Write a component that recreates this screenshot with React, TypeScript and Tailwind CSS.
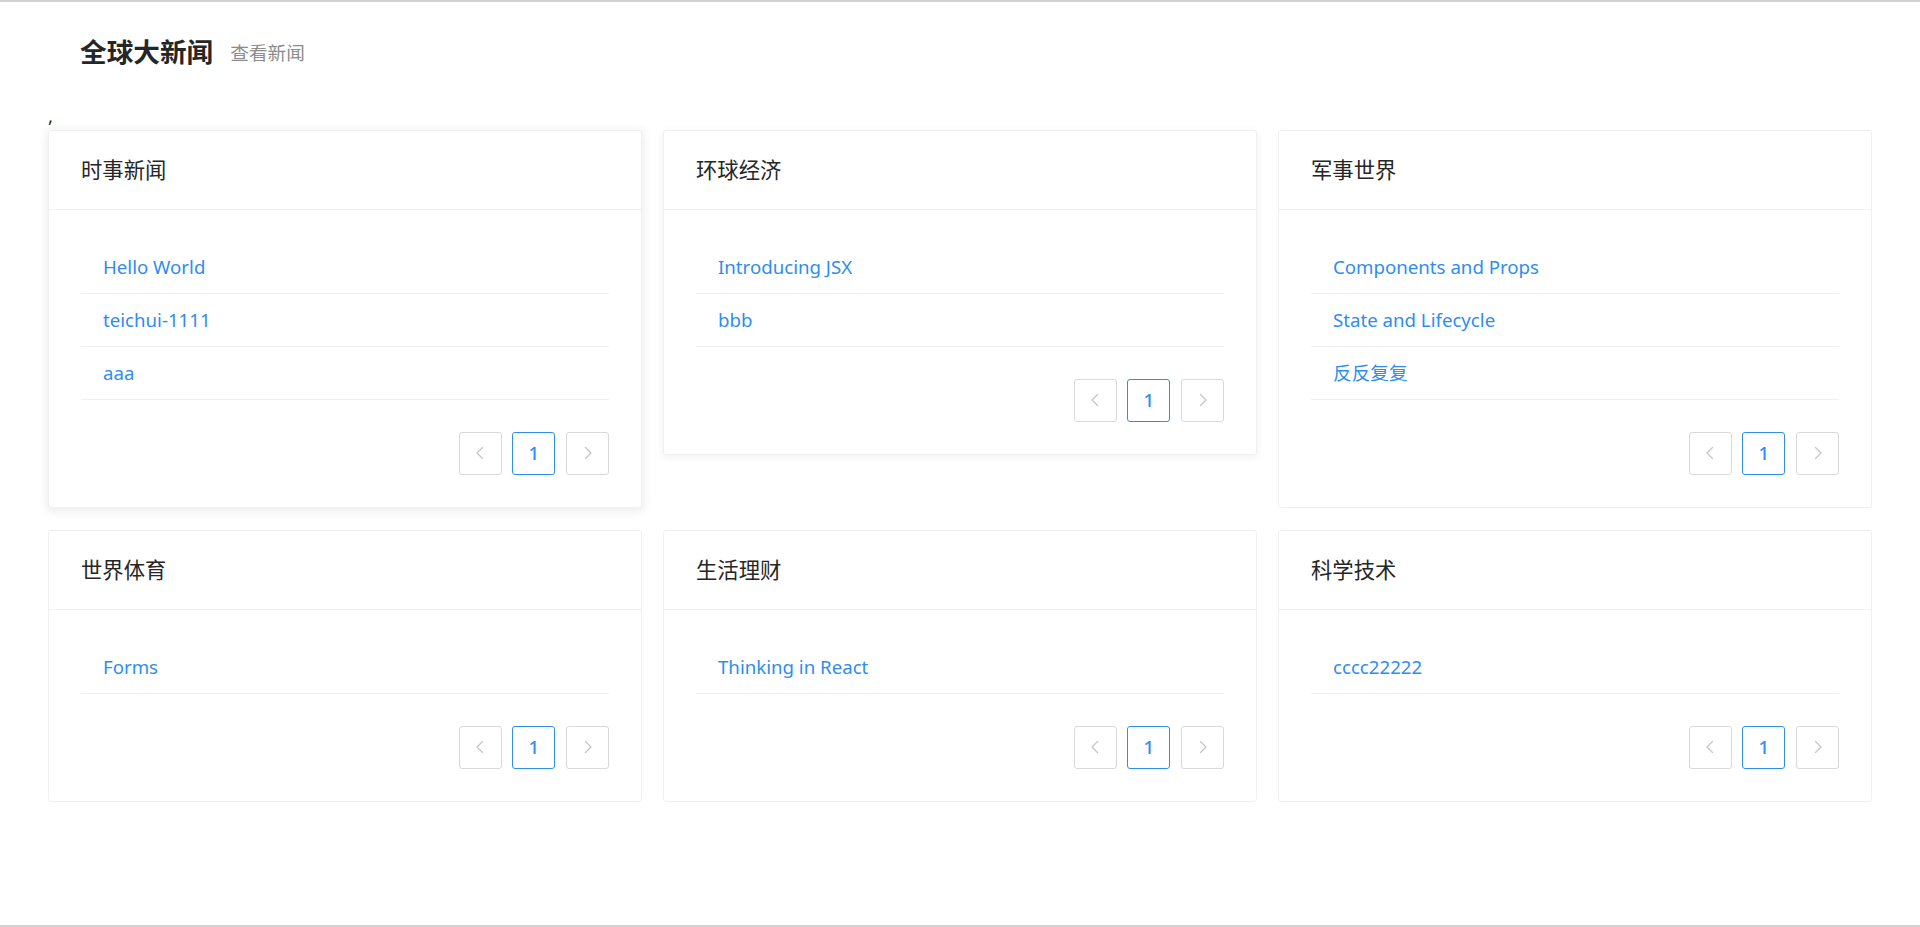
import { useState } from 'react'

const font = { fontFamily: '"Noto Sans", "Noto Sans CJK SC", sans-serif' }

type Category = {
  title: string
  items: string[]
  shadow?: 'hover' | 'fade'
}

const categories: Category[] = [
  { title: '时事新闻', items: ['Hello World', 'teichui-1111', 'aaa'], shadow: 'hover' },
  { title: '环球经济', items: ['Introducing JSX', 'bbb'], shadow: 'fade' },
  { title: '军事世界', items: ['Components and Props', 'State and Lifecycle', '反反复复'] },
  { title: '世界体育', items: ['Forms'] },
  { title: '生活理财', items: ['Thinking in React'] },
  { title: '科学技术', items: ['cccc22222'] }
]

function Arrow({ dir }: { dir: 'left' | 'right' }) {
  return (
    <svg width="16" height="16" viewBox="0 0 16 16" fill="none">
      <polyline
        points={dir === 'left' ? '10.5,2.5 5,8 10.5,13.5' : '5.5,2.5 11,8 5.5,13.5'}
        stroke="#c4c4c4"
        strokeWidth="1.2"
        strokeLinecap="round"
        strokeLinejoin="round"
      />
    </svg>
  )
}

function Pager() {
  const [page, setPage] = useState(1)
  return (
    <div className="mt-[32px] flex justify-end gap-[10.67px]">
      <button className="flex h-[43px] w-[43px] cursor-not-allowed items-center justify-center rounded-[3px] border border-[#d9d9d9] bg-white">
        <Arrow dir="left" />
      </button>
      <button
        onClick={() => setPage(1)}
        className="flex h-[43px] w-[43px] items-center justify-center rounded-[3px] border border-[#2f8ded] bg-white text-[18.67px] font-medium text-[#2f8ded]"
      >
        {page}
      </button>
      <button className="flex h-[43px] w-[43px] cursor-not-allowed items-center justify-center rounded-[3px] border border-[#d9d9d9] bg-white">
        <Arrow dir="right" />
      </button>
    </div>
  )
}

function NewsCard({ title, items, shadow }: Category) {
  const shadowClass =
    shadow === 'hover'
      ? 'shadow-[0_2px_10px_2px_rgba(0,0,0,0.07)]'
      : shadow === 'fade'
        ? 'shadow-[0_2px_8px_1px_rgba(0,0,0,0.05)]'
        : ''
  return (
    <div className={`rounded-[3px] border border-[#f0f0f0] bg-white ${shadowClass}`}>
      <div className="flex h-[79px] items-center border-b border-[#f0f0f0] px-[32px] text-[21.33px] text-[#262626]">
        {title}
      </div>
      <div className="px-[32px] pb-[32px] pt-[31px]">
        <ul>
          {items.map((item) => (
            <li key={item} className="flex h-[53px] items-center border-b border-[#f0f0f0] px-[22px]">
              <a href="#" className="text-[18.67px] leading-[29px] text-[#2f8ded]">
                {item}
              </a>
            </li>
          ))}
        </ul>
        <Pager />
      </div>
    </div>
  )
}

export default function App() {
  return (
    <div
      className="h-[927px] overflow-hidden border-y-2 border-[#d2d2d2] bg-white"
      style={font}
    >
      <div className="px-[48px]">
        <div className="flex items-center pb-[27px] pl-[32px] pt-[29px]">
          <span className="text-[26.67px] font-semibold leading-[42.67px] text-[#262626]">全球大新闻</span>
          <span className="ml-[17px] text-[18.67px] leading-[29px] text-[#8c8c8c]">查看新闻</span>
        </div>
        <div className="text-[18.67px] leading-[29px] text-[#262626]">,</div>
        <div className="grid grid-cols-3 items-start gap-x-[21px] gap-y-[22px]">
          {categories.map((c) => (
            <NewsCard key={c.title} {...c} />
          ))}
        </div>
      </div>
    </div>
  )
}
